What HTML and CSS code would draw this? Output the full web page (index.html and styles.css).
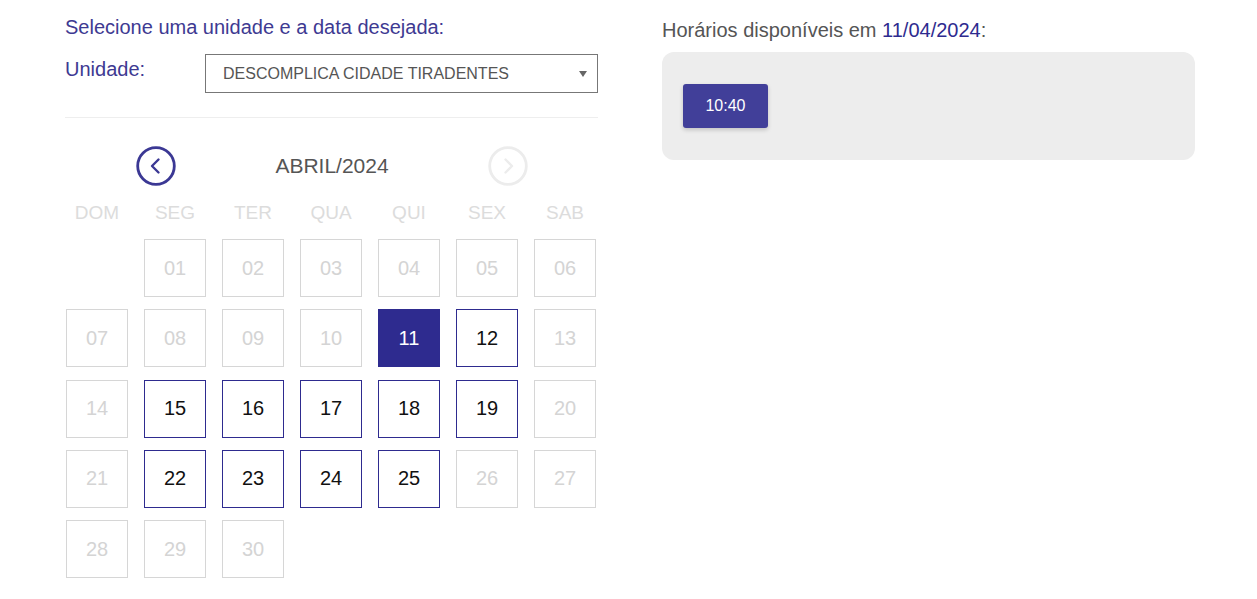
FILE: index.html
```html
<!DOCTYPE html>
<html lang="pt-BR">
<head>
<meta charset="utf-8">
<title>Agendamento</title>
<link rel="stylesheet" href="styles.css">
</head>
<body>
<div class="page">
  <section class="col left">
    <h2 class="title">Selecione uma unidade e a data desejada:</h2>
    <div class="unit-row">
      <label class="unit-label">Unidade:</label>
      <div class="select">
        <span class="select-text">DESCOMPLICA CIDADE TIRADENTES</span>
        <span class="select-arrow"></span>
      </div>
    </div>
    <hr class="divider">
    <div class="cal-head">
      <button class="nav nav-prev" aria-label="Anterior">
        <svg width="40" height="40" viewBox="0 0 40 40"><circle cx="20" cy="20" r="18.3" fill="none" stroke="#3b3894" stroke-width="2.8"/><path d="M22.5 13.5 L16 20 L22.5 26.5" fill="none" stroke="#3b3894" stroke-width="2.4" stroke-linecap="round" stroke-linejoin="round"/></svg>
      </button>
      <div class="month">ABRIL/2024</div>
      <button class="nav nav-next" aria-label="Próximo">
        <svg width="40" height="40" viewBox="0 0 40 40"><circle cx="20" cy="20" r="18.3" fill="none" stroke="#ececec" stroke-width="2.8"/><path d="M17.5 13.5 L24 20 L17.5 26.5" fill="none" stroke="#ececec" stroke-width="2.4" stroke-linecap="round" stroke-linejoin="round"/></svg>
      </button>
    </div>
    <div class="weekdays">
      <span>DOM</span><span>SEG</span><span>TER</span><span>QUA</span><span>QUI</span><span>SEX</span><span>SAB</span>
    </div>
    <div class="days">
      <span class="day empty"></span>
      <span class="day off">01</span>
      <span class="day off">02</span>
      <span class="day off">03</span>
      <span class="day off">04</span>
      <span class="day off">05</span>
      <span class="day off">06</span>
      <span class="day off">07</span>
      <span class="day off">08</span>
      <span class="day off">09</span>
      <span class="day off">10</span>
      <span class="day selected">11</span>
      <span class="day on">12</span>
      <span class="day off">13</span>
      <span class="day off">14</span>
      <span class="day on">15</span>
      <span class="day on">16</span>
      <span class="day on">17</span>
      <span class="day on">18</span>
      <span class="day on">19</span>
      <span class="day off">20</span>
      <span class="day off">21</span>
      <span class="day on">22</span>
      <span class="day on">23</span>
      <span class="day on">24</span>
      <span class="day on">25</span>
      <span class="day off">26</span>
      <span class="day off">27</span>
      <span class="day off">28</span>
      <span class="day off">29</span>
      <span class="day off">30</span>
    </div>
  </section>
  <section class="col right">
    <h2 class="slots-title">Horários disponíveis em <span class="date">11/04/2024</span>:</h2>
    <div class="slots">
      <button class="slot">10:40</button>
    </div>
  </section>
</div>
</body>
</html>
```

FILE: styles.css
```css
html, body {
  margin: 0;
  padding: 0;
  background: #ffffff;
}
body {
  font-family: "Liberation Sans", Arial, sans-serif;
}
.page {
  display: flex;
  gap: 64px;
  padding-left: 65px;
}
.col {
  width: 533px;
  flex: none;
}
.title {
  margin: 15px 0 0;
  font-size: 20px;
  font-weight: normal;
  color: #3e3a92;
  line-height: 24px;
}
.unit-row {
  display: flex;
  align-items: flex-start;
  margin-top: 15px;
}
.unit-label {
  width: 140px;
  font-size: 20px;
  color: #3e3a92;
  line-height: 24px;
  padding-top: 3px;
}
.select {
  flex: 1;
  height: 39px;
  box-sizing: border-box;
  border: 1px solid #777;
  display: flex;
  align-items: center;
  padding-left: 17px;
  padding-right: 10px;
}
.select-text {
  flex: 1;
  font-size: 16px;
  color: #555;
  padding-top: 1px;
}
.select-arrow {
  width: 0;
  height: 0;
  border-left: 4px solid transparent;
  border-right: 4px solid transparent;
  border-top: 6px solid #666;
  margin-top: 1px;
}
.divider {
  border: 0;
  border-top: 1px solid #eeeeee;
  margin: 24px 0 0;
}
.cal-head {
  display: flex;
  align-items: center;
  justify-content: space-between;
  padding: 0 70px 0 71px;
  margin-top: 28px;
  height: 40px;
}
.nav {
  width: 40px;
  height: 40px;
  padding: 0;
  border: 0;
  background: none;
  display: block;
}
.nav svg { display: block; }
.month {
  font-size: 21px;
  color: #555;
}
.weekdays {
  display: grid;
  grid-template-columns: repeat(7, 62px);
  column-gap: 16px;
  padding-left: 1px;
  margin-top: 15px;
  height: 24px;
  line-height: 24px;
}
.weekdays span {
  text-align: center;
  font-size: 19px;
  color: #dcdcdc;
}
.days {
  display: grid;
  grid-template-columns: repeat(7, 62px);
  grid-auto-rows: 58px;
  column-gap: 16px;
  row-gap: 12.3px;
  padding-left: 1px;
  margin-top: 14px;
}
.day {
  box-sizing: border-box;
  display: flex;
  align-items: center;
  justify-content: center;
  font-size: 20px;
}
.day.empty { border: 0; }
.day.off {
  border: 1px solid #d6d6d6;
  color: #d4d4d4;
}
.day.on {
  border: 1px solid #2e2b8f;
  color: #111;
}
.day.selected {
  background: #2e2b8f;
  color: #fff;
  border: 1px solid #2e2b8f;
}
.slots-title {
  margin: 18px 0 0;
  font-size: 20px;
  font-weight: normal;
  color: #555;
  line-height: 24px;
}
.date { color: #2e2b8f; }
.slots {
  margin-top: 10px;
  background: #ededed;
  border-radius: 12px;
  height: 108px;
  box-sizing: border-box;
  padding: 32px 21px;
}
.slot {
  width: 85px;
  height: 44px;
  border: 0;
  border-radius: 3px;
  background: #413f99;
  color: #fff;
  font-family: "Liberation Sans", Arial, sans-serif;
  font-size: 16px;
  box-shadow: 0 2px 4px rgba(0,0,0,0.18);
  padding: 0;
}
```
